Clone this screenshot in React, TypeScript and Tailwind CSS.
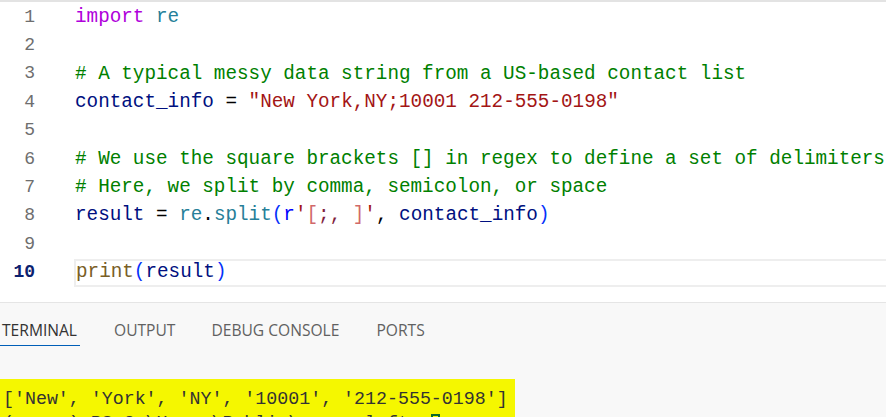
import React from "react";

type Tok = [string, string];

const C = {
  kw: "#af00db",
  mod: "#267f99",
  com: "#008000",
  v: "#001080",
  str: "#a31515",
  op: "#000000",
  fn: "#795e26",
  br: "#0431fa",
  pre: "#0000ff",
  rx: "#811f3f",
  rxb: "#d16969",
};

const lines: Tok[][] = [
  [["import", C.kw], [" ", C.op], ["re", C.mod]],
  [],
  [["# A typical messy data string from a US-based contact list", C.com]],
  [["contact_info", C.v], [" = ", C.op], ['"New York,NY;10001 212-555-0198"', C.str]],
  [],
  [["# We use the square brackets [] in regex to define a set of delimiters", C.com]],
  [["# Here, we split by comma, semicolon, or space", C.com]],
  [
    ["result", C.v],
    [" = ", C.op],
    ["re", C.mod],
    [".", C.op],
    ["split", C.mod],
    ["(", C.br],
    ["r", C.pre],
    ["'", C.str],
    ["[", C.rxb],
    [";, ", C.rx],
    ["]", C.rxb],
    ["'", C.str],
    [", ", C.op],
    ["contact_info", C.v],
    [")", C.br],
  ],
  [],
  [["print", C.fn], ["(", C.br], ["result", C.v], [")", C.br]],
];

export default function App() {
  return (
    <div className="w-[886px] h-[417px] overflow-hidden bg-white flex flex-col">
      <div className="h-[302px] border-t-2 border-[#e3e3e3] pt-[1px] bg-white shrink-0 overflow-hidden">
        {lines.map((toks, i) => {
          const current = i === 9;
          return (
            <div key={i} className="flex h-[28.4px] items-center">
              <div
                className={`w-[35px] shrink-0 text-right text-[18px] font-['Liberation_Mono','DejaVu_Sans_Mono',monospace] ${
                  current ? "text-[#0b216f] font-bold" : "text-[#6e6e6e]"
                }`}
              >
                {i + 1}
              </div>
              <div
                className={`ml-[39px] flex-1 min-w-0 overflow-hidden h-full flex items-center whitespace-pre text-[19.3px] font-['Liberation_Mono','DejaVu_Sans_Mono',monospace] ${
                  current ? "border-y-2 border-l-2 border-[#eeeeee]" : "pl-[1px]"
                }`}
              >
                {toks.map(([t, c], j) => (
                  <span key={j} className="shrink-0" style={{ color: c }}>
                    {t}
                  </span>
                ))}
              </div>
            </div>
          );
        })}
      </div>
      <div className="flex-1 min-h-0 border-t border-[#e5e5e5] bg-[#f8f8f8] flex flex-col">
        <div className="flex items-start h-[44px] pt-[16px] text-[15.6px] leading-[22px] font-['Open_Sans',sans-serif] text-[#616161] shrink-0">
          <div className="relative pl-[2px] pr-[3px] text-[#333333]">
            TERMINAL
            <div className="absolute left-0 right-0 top-[26px] h-[1px] bg-[#005fb8]" />
          </div>
          <div className="ml-[34px]">OUTPUT</div>
          <div className="ml-[36px]">DEBUG CONSOLE</div>
          <div className="ml-[37px]">PORTS</div>
        </div>
        <div className="mt-[32px] w-[515px] flex-1 min-h-0 bg-[#f5f700] pt-[6px] pl-[3px] overflow-hidden font-['Liberation_Mono','DejaVu_Sans_Mono',monospace] text-[18.3px] text-[#333333] leading-[21px] whitespace-pre">
          <div className="pt-[4px]">['New', 'York', 'NY', '10001', '212-555-0198']</div>
          <div className="flex items-start mt-[3px]">
            <span>{"(.venv) PS C:\\Users\\Public\\regex_left> "}</span>
            <span className="mt-[1px] w-[9px] h-[20px] border-2 border-[#0b6a2a]" />
          </div>
        </div>
      </div>
    </div>
  );
}
